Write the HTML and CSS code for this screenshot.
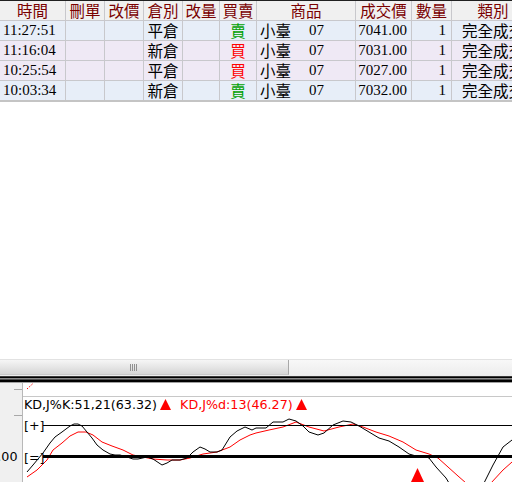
FILE: index.html
```html
<!DOCTYPE html>
<html>
<head>
<meta charset="utf-8">
<link rel="stylesheet" href="styles.css">
</head>
<body>
<div class="page">
  <div class="grid">
    <div class="h">時間</div>
    <div class="h">刪單</div>
    <div class="h">改價</div>
    <div class="h">倉別</div>
    <div class="h">改量</div>
    <div class="h">買賣</div>
    <div class="h">商品</div>
    <div class="h">成交價</div>
    <div class="h">數量</div>
    <div class="h">類別</div>

    <div class="d b l">11:27:51</div>
    <div class="d b"></div>
    <div class="d b"></div>
    <div class="d b m cj">平倉</div>
    <div class="d b"></div>
    <div class="d b m cj sell">賣</div>
    <div class="d b l"><span class="cj">小臺</span><span class="mo">07</span></div>
    <div class="d b r">7041.00</div>
    <div class="d b r q">1</div>
    <div class="d b m cj">完全成交</div>

    <div class="d p l">11:16:04</div>
    <div class="d p"></div>
    <div class="d p"></div>
    <div class="d p m cj">新倉</div>
    <div class="d p"></div>
    <div class="d p m cj buy">買</div>
    <div class="d p l"><span class="cj">小臺</span><span class="mo">07</span></div>
    <div class="d p r">7031.00</div>
    <div class="d p r q">1</div>
    <div class="d p m cj">完全成交</div>

    <div class="d p l">10:25:54</div>
    <div class="d p"></div>
    <div class="d p"></div>
    <div class="d p m cj">平倉</div>
    <div class="d p"></div>
    <div class="d p m cj buy">買</div>
    <div class="d p l"><span class="cj">小臺</span><span class="mo">07</span></div>
    <div class="d p r">7027.00</div>
    <div class="d p r q">1</div>
    <div class="d p m cj">完全成交</div>

    <div class="d b l">10:03:34</div>
    <div class="d b"></div>
    <div class="d b"></div>
    <div class="d b m cj">新倉</div>
    <div class="d b"></div>
    <div class="d b m cj sell">賣</div>
    <div class="d b l"><span class="cj">小臺</span><span class="mo">07</span></div>
    <div class="d b r">7032.00</div>
    <div class="d b r q">1</div>
    <div class="d b m cj">完全成交</div>
  </div>

  <div class="blank"></div>

  <div class="hscroll">
    <div class="thumb"><span class="grip"></span></div>
  </div>
  <div class="split"></div>

  <div class="chart">
    <div class="axis">
      <svg width="22" height="99" viewBox="0 383 22 99">
        <line x1="14" y1="389.5" x2="22" y2="389.5" stroke="#a8a8a8" stroke-width="1"/>
        <line x1="14" y1="415.5" x2="22" y2="415.5" stroke="#a8a8a8" stroke-width="1"/>
        <text x="17.5" y="461" text-anchor="end" class="axt">.00</text>
      </svg>
    </div>
    <div class="plot">
      <div class="upper">
        <svg width="489" height="13" viewBox="23 383 489 13">
          <line x1="27" y1="389" x2="33" y2="383.5" stroke="#ff0000" stroke-width="1" stroke-dasharray="1.5 1.5"/>
        </svg>
      </div>
      <div class="kd">
        <svg class="lines" width="489" height="85" viewBox="23 397 489 85">
          <polyline fill="none" stroke="#ff0000" stroke-width="1" points="27,477 37,470 47,460 53,450 62,443 70,436 78,432 86,432 93,435 102,442 112,446 123,450 133,455 143,457 153,459 167,460 180,460 190,458 203,454 217,452 230,447 240,440 250,435 256,433 269,430 283,427 296,422 309,427 324,431 339,427 353,424 363,427 376,432 389,436 403,442 416,450 429,454 438,458 448,467 458,476 466,483"/>
          <polyline fill="none" stroke="#ff0000" stroke-width="1" points="491,483 503,470 512,462"/>
          <polyline fill="none" stroke="#000000" stroke-width="1" points="27,472 33,465 43,453 50,443 55,437 62,432 70,426 74,424 78,424 82,426 87,432 92,438 97,445 103,450 110,454 115,455 120,455 127,457 133,459 138,459 147,457 153,459 162,465 167,463 172,460 180,460 187,458 193,452 200,447 205,449 210,452 217,452 222,450 230,437 237,431 245,427 252,430 256,428 266,428 273,422 283,422 289,419 296,421 303,426 309,432 318,435 324,433 333,425 343,421 351,422 359,426 369,432 379,438 389,441 399,447 409,454 416,456 424,456 429,458 436,467 446,478 449,483"/>
          <polyline fill="none" stroke="#000000" stroke-width="1" points="484,483 493,465 503,447 512,440"/>
          <line x1="43" y1="425.5" x2="512" y2="425.5" stroke="#000" stroke-width="1"/>
          <line x1="43" y1="456.5" x2="512" y2="456.5" stroke="#000" stroke-width="3"/>
          <text x="24" y="429.5" class="lab">[+]</text>
          <text x="24" y="461.5" class="lab">[=]</text>
          <polygon points="411,482 417.5,468 424,482" fill="#ff0000"/>
        </svg>
        <div class="legend">
          <span class="lk">KD,J%K:51,21(63.32)</span>
          <svg class="tri" width="11" height="11" viewBox="0 0 11 11"><polygon points="0,11 5.5,0 11,11" fill="#ff0000"/></svg>
          <span class="ld">KD,J%d:13(46.27)</span>
          <svg class="tri" width="11" height="11" viewBox="0 0 11 11"><polygon points="0,11 5.5,0 11,11" fill="#ff0000"/></svg>
        </div>
      </div>
    </div>
  </div>
</div>
</body>
</html>
```

FILE: styles.css
```css
html, body {
  margin: 0;
  padding: 0;
  background: #ffffff;
}

.page {
  width: 512px;
  height: 482px;
  overflow: hidden;
  display: flex;
  flex-direction: column;
  background: #ffffff;
}

.grid {
  display: grid;
  grid-template-columns: 65px 38px 38px 38px 36px 36px 98px 55px 39px 82px;
  grid-auto-rows: 19px;
  column-gap: 1px;
  row-gap: 1px;
  width: max-content;
  background: #c8c8cc;
  border-top: 1px solid #202020;
  border-bottom: 2px solid #c4c4c4;
  flex: none;
}

.h {
  background: #f0f0f0;
  color: #7a0000;
  font-family: "Noto Sans CJK TC", sans-serif;
  font-size: 15.5px;
  line-height: 1;
  display: flex;
  align-items: center;
  justify-content: center;
}

.d {
  font-family: "Liberation Serif", "Noto Sans CJK TC", serif;
  font-size: 15px;
  line-height: 1;
  color: #000;
  display: flex;
  align-items: center;
  white-space: nowrap;
}

.b { background: #e7eef8; }
.p { background: #efe9f5; }

.l { justify-content: flex-start; padding-left: 3px; }
.m { justify-content: center; }
.r { justify-content: flex-end; padding-right: 4px; }
.q { padding-right: 5px; }

.cj {
  font-family: "Noto Sans CJK TC", sans-serif;
  font-size: 15.5px;
  line-height: 1;
}

.mo { margin-left: 18px; }

.sell { color: #00a000; }
.buy { color: #ff0000; }

.blank { flex: 1; }

.hscroll {
  flex: none;
  height: 16px;
  border-top: 1px solid #e2e2e2;
  background: linear-gradient(#f8f8f8, #ececec);
  display: flex;
}

.thumb {
  width: 289px;
  height: 15px;
  box-sizing: border-box;
  border-right: 1px solid #a8a8a8;
  border-bottom: 1px solid #c8c8c8;
  background: linear-gradient(#f6f6f6, #d6d6d6);
  display: flex;
  align-items: center;
  padding-left: 130px;
}

.grip {
  width: 8px;
  height: 7px;
  background: repeating-linear-gradient(90deg, #909090 0 1px, transparent 1px 2px);
}

.split {
  flex: none;
  height: 7px;
  background: linear-gradient(#3a3a3a 0 1px, #000 1px 2px, #8a8a8a 2px 3px, #505050 3px 4px, #000 4px 6px, #a0a0a0 6px 7px);
}

.chart {
  flex: none;
  height: 99px;
  display: flex;
}

.axis {
  width: 22px;
  flex: none;
  background: #f0f0f0;
  border-right: 1px solid #b8b8b8;
}

.axis svg { display: block; }

.axt {
  font-family: "DejaVu Sans", sans-serif;
  font-size: 12.7px;
  fill: #000;
}

.plot {
  flex: 1;
  display: flex;
  flex-direction: column;
  background: #fff;
}

.upper {
  height: 13px;
  flex: none;
  border-bottom: 1px solid #c8c8c8;
}

.upper svg { display: block; }

.kd {
  flex: 1;
  position: relative;
  overflow: hidden;
}

.lines {
  position: absolute;
  left: 0;
  top: 0;
  display: block;
}

.lab {
  font-family: "DejaVu Sans", sans-serif;
  font-size: 12.7px;
  fill: #000;
}

.legend {
  position: relative;
  display: flex;
  align-items: center;
  height: 15px;
  padding-left: 1px;
  font-family: "DejaVu Sans", sans-serif;
  font-size: 12.7px;
  line-height: 15px;
  white-space: nowrap;
}

.lk { color: #000; }
.ld { color: #ff0000; margin-left: 9px; }
.tri { margin-left: 3px; flex: none; display: block; }
```
